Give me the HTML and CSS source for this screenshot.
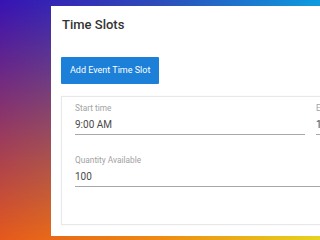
FILE: index.html
```html
<!DOCTYPE html>
<html lang="en">
<head>
    <meta charset="UTF-8">
    <meta name="viewport" content="width=device-width, initial-scale=1.0">
    <title>Time Slots</title>
    <link rel="stylesheet" href="styles.css">
</head>
<body>
    <div class="card">
        <h1 class="card-title">Time Slots</h1>

        <button class="btn-primary">Add Event Time Slot</button>

        <div class="slot">
            <div class="slot-row">
                <div class="field field-start">
                    <label class="field-label">Start time</label>
                    <div class="field-value">9:00 AM</div>
                </div>
                <div class="field field-end">
                    <label class="field-label">End time</label>
                    <div class="field-value">10:00 AM</div>
                </div>
            </div>

            <div class="field field-qty">
                <label class="field-label">Quantity Available</label>
                <div class="field-value">100</div>
            </div>
        </div>
    </div>
</body>
</html>
```

FILE: styles.css
```css
* {
    margin: 0;
    padding: 0;
    box-sizing: border-box;
}

html {
    height: 100%;
    background: linear-gradient(to right, #e65a1c 0%, #f08c10 50%, #e8d41e 100%);
}

body {
    font-family: Roboto, 'Liberation Sans', Arial, sans-serif;
    height: 240px;
    overflow: hidden;
    padding: 6px 0 0 51px;
    position: relative;
}

/* top colour row, faded down over the orange one */
body::before {
    content: "";
    position: absolute;
    inset: 0;
    z-index: -1;
    background: linear-gradient(to right, #3612b4 0%, #2a4cbc 50%, #0a9ae2 100%);
    -webkit-mask-image: linear-gradient(to bottom, #000 0%, rgba(0, 0, 0, 0.55) 45%, transparent 100%);
    mask-image: linear-gradient(to bottom, #000 0%, rgba(0, 0, 0, 0.55) 45%, transparent 100%);
}

.card {
    background: #fff;
    width: 560px;
    padding: 11px 10px 11px;
}

.card-title {
    font-size: 13px;
    line-height: 15px;
    font-weight: 500;
    color: #333;
    padding-left: 1px;
}

.btn-primary {
    display: block;
    margin-top: 25px;
    height: 27px;
    padding: 0 9px;
    border: none;
    border-radius: 1px;
    background: #1c80d8;
    color: #fff;
    font-family: inherit;
    font-size: 9px;
    line-height: 27px;
    cursor: pointer;
}

.slot {
    margin-top: 12px;
    border: 1px solid #e8e8e8;
    box-shadow: 0 0 1px rgba(0, 0, 0, 0.08);
    padding: 6px 13px 37px;
}

.slot-row {
    display: flex;
    gap: 11px;
}

.field-start {
    width: 230px;
}

.field-end {
    flex: 1;
}

.field-qty {
    margin-top: 20px;
}

.field-label {
    display: block;
    font-size: 8.3px;
    line-height: 10px;
    color: #a2a2a2;
}

.field-value {
    margin-top: 6px;
    font-size: 10px;
    line-height: 12px;
    color: #4a4a4a;
    padding-bottom: 3px;
    border-bottom: 1px solid #a8a8a8;
}
```
